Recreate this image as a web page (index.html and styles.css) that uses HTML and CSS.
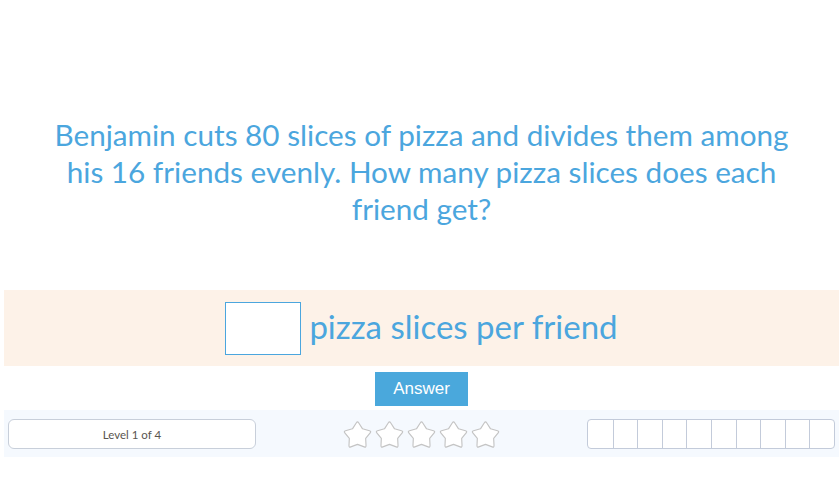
FILE: index.html
```html
<!DOCTYPE html>
<html lang="en">
<head>
  <meta charset="UTF-8" />
  <title>Pizza Slices</title>
  <link rel="stylesheet" href="styles.css">
</head>
<body>

  <svg class="defs" aria-hidden="true">
    <symbol id="star" viewBox="1.2 1.5 29.6 27.6">
      <path d="M14.94 4.12Q16 2.5 17.06 4.12L20.82 9.87 27.44 11.66Q29.31 12.17 28.1 13.68L23.8 19.03 24.14 25.89Q24.23 27.83 22.42 27.14L16 24.7 9.58 27.14Q7.77 27.83 7.86 25.89L8.2 19.03 3.9 13.68Q2.69 12.17 4.56 11.66L11.18 9.87Z" />
    </symbol>
  </svg>

  <div class="page">
    <div class="question">
      <p>Benjamin cuts 80 slices of pizza and divides them among his 16 friends evenly. How many pizza slices does each friend get?</p>
    </div>

    <div class="answer-row">
      <input type="text" class="answer-input" />
      <span class="answer-unit">pizza slices per friend</span>
    </div>

    <div class="submit-row">
      <button type="button">Answer</button>
    </div>

    <div class="status-bar">
      <div class="level">Level 1 of 4</div>

      <div class="stars">
        <svg><use href="#star" /></svg>
        <svg><use href="#star" /></svg>
        <svg><use href="#star" /></svg>
        <svg><use href="#star" /></svg>
        <svg><use href="#star" /></svg>
      </div>

      <div class="progress">
        <span></span><span></span><span></span><span></span><span></span>
        <span></span><span></span><span></span><span></span><span></span>
      </div>
    </div>
  </div>

</body>
</html>
```

FILE: styles.css
```css
body {
  margin: 0;
  background-color: #fff;
  font-family: Lato, "Liberation Sans", sans-serif;
}
.defs {
  display: none;
}
.page {
  padding: 0 1px 0 4px;
}
.question {
  height: 290px;
  display: flex;
  align-items: center;
  justify-content: center;
  padding-top: 52px;
  box-sizing: border-box;
}
.question p {
  margin: 0;
  max-width: 760px;
  text-align: center;
  font-size: 29.7px;
  line-height: 37px;
  color: #4ba6de;
}
.answer-row {
  height: 76px;
  background-color: #fdf2e8;
  display: flex;
  align-items: center;
  justify-content: center;
  gap: 8px;
}
.answer-input {
  width: 76px;
  height: 53px;
  box-sizing: border-box;
  border: 1px solid #4ba6de;
  background: #fff;
  outline: none;
  margin: 0;
}
.answer-unit {
  font-size: 33px;
  color: #4ba6de;
  padding-bottom: 4px;
}
.submit-row {
  display: flex;
  justify-content: center;
  padding: 6px 0 4px;
}
button {
  width: 93px;
  height: 34px;
  background-color: #4aa8dc;
  color: #fff;
  border: none;
  border-radius: 0;
  font-family: "Liberation Sans", Arial, sans-serif;
  font-size: 17px;
  cursor: pointer;
}
.status-bar {
  background-color: #f5f9fe;
  padding: 9px 4px 8px;
  display: flex;
  justify-content: space-between;
  align-items: center;
}
.level {
  width: 248px;
  height: 30px;
  box-sizing: border-box;
  border: 1px solid #c8cfda;
  border-radius: 6px;
  background: #fff;
  display: flex;
  align-items: center;
  justify-content: center;
  font-size: 11.5px;
  color: #5a5550;
}
.stars {
  display: flex;
  gap: 1px;
}
.stars svg {
  width: 31px;
  height: 29px;
  fill: #fff;
  stroke: #c4c4c4;
  stroke-width: 1.1;
  stroke-linejoin: round;
}
.progress {
  width: 248px;
  height: 30px;
  box-sizing: border-box;
  border: 1px solid #c3cbda;
  border-radius: 4px;
  background: #fff;
  display: grid;
  grid-template-columns: repeat(10, 1fr);
  overflow: hidden;
}
.progress span {
  border-left: 1px solid #c3cbda;
}
.progress span:first-child {
  border-left: none;
}
```
